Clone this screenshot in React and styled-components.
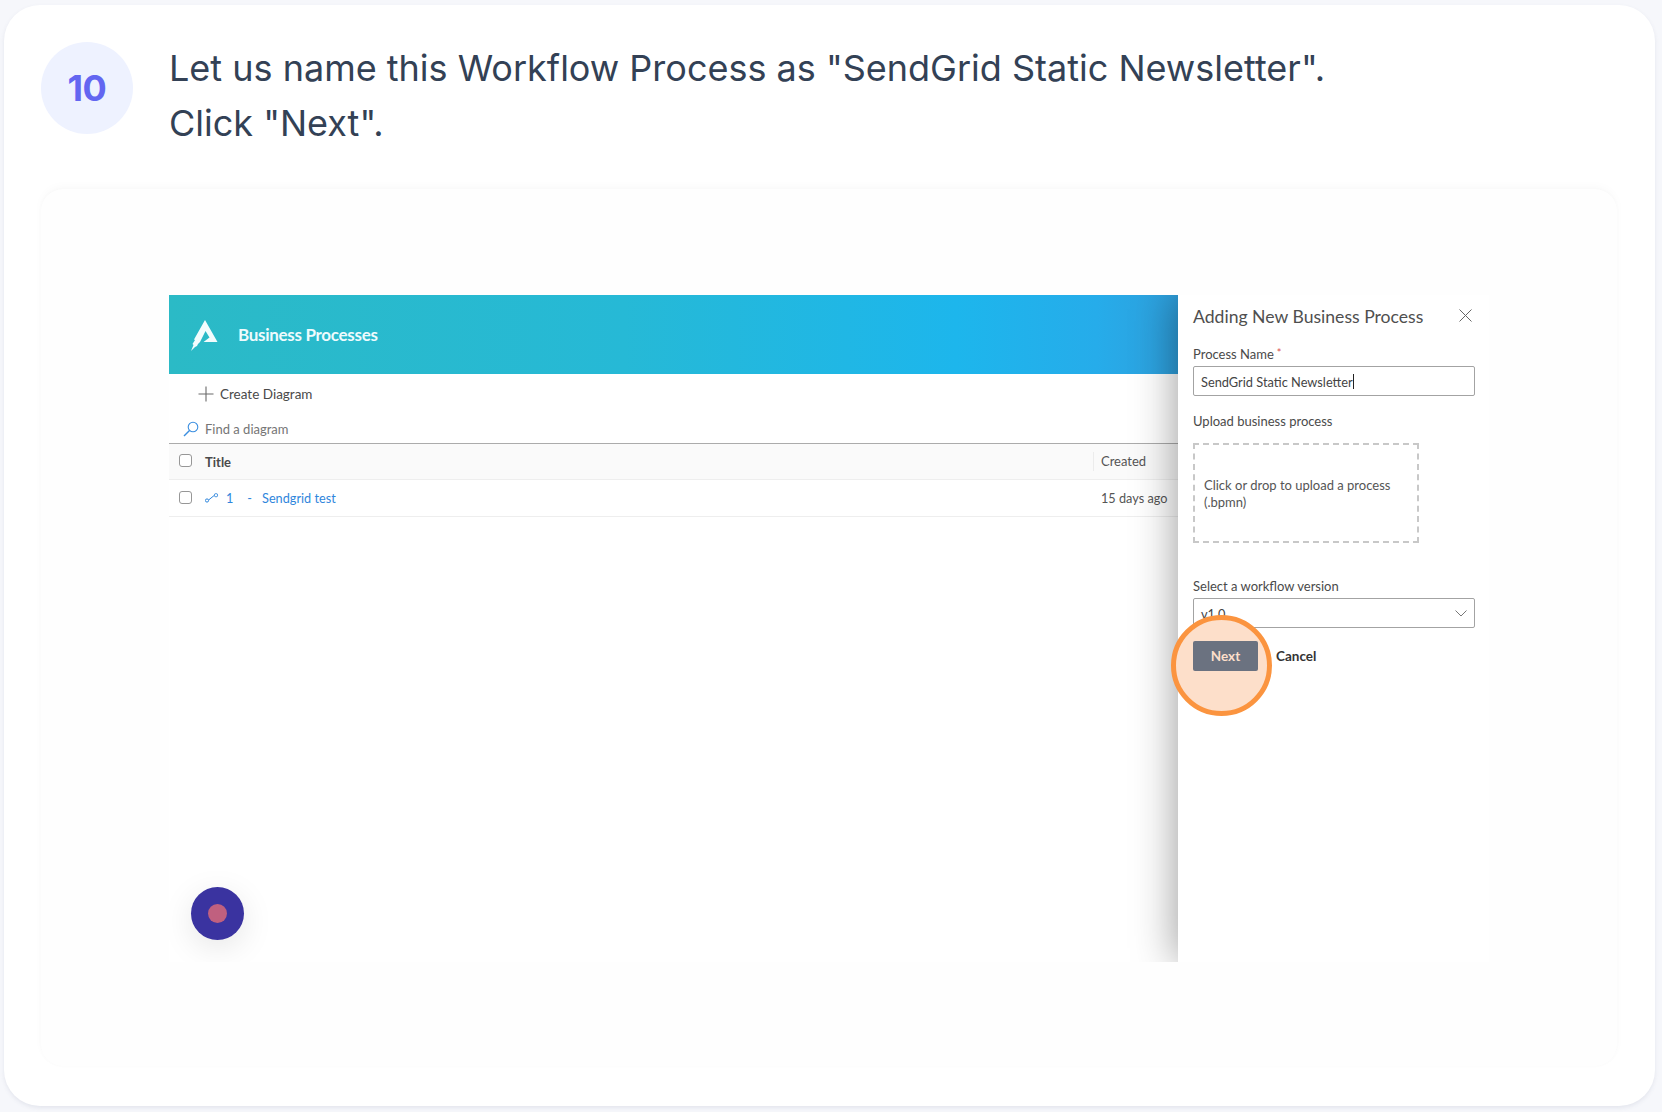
import React from 'react';
import styled, { createGlobalStyle } from 'styled-components';

const GlobalStyle = createGlobalStyle`
  html, body {
    margin: 0;
    padding: 0;
    background: #f6f7fb;
  }
  * { box-sizing: border-box; }
`;

const Page = styled.div`
  width: 1662px;
  height: 1112px;
  padding: 5px 7px 6px 4px;
  overflow: hidden;
`;

const Card = styled.div`
  height: 100%;
  background: #fff;
  border-radius: 36px;
  box-shadow: 0 2px 4px rgba(100, 110, 140, 0.12);
  padding: 37px 38px 40px 37px;
  display: flex;
  flex-direction: column;
`;

const StepRow = styled.div`
  display: flex;
  align-items: flex-start;
  height: 147px;
  gap: 36px;
`;

const StepBadge = styled.div`
  width: 92px;
  height: 92px;
  flex: none;
  border-radius: 50%;
  background: #eef2ff;
  color: #6366f1;
  display: flex;
  align-items: center;
  justify-content: center;
  font: 700 36px 'Inter', sans-serif;
  letter-spacing: -0.5px;
`;

const StepText = styled.div`
  font: 400 36px/55px 'Inter', sans-serif;
  color: #334155;
  margin-top: -1px;
`;

const Frame = styled.div`
  flex: 1;
  border-radius: 22px;
  background: #fefefe;
  box-shadow: 0 -3px 6px rgba(120, 125, 140, 0.04), 0 0 3px rgba(120, 125, 140, 0.03);
  padding: 106px 128px 0 128px;
`;

const Shot = styled.div`
  position: relative;
  height: 667px;
  display: grid;
  grid-template-columns: 1009px 1fr;
  background: #fff;
  overflow: hidden;
  font-family: 'Lato', sans-serif;
  font-size: 13px;
  color: #444;
`;

const Main = styled.div`
  display: flex;
  flex-direction: column;
`;

const Banner = styled.div`
  height: 79px;
  display: flex;
  align-items: center;
  gap: 18px;
  padding-left: 21px;
  background: linear-gradient(90deg, #2bbac6 0%, #26b9d6 45%, #1db6ec 78%, #26acea 92%, #2f9fdc 100%);
  color: #eefbfd;
  font-size: 17px;
  font-weight: 700;
  letter-spacing: -0.3px;
`;

const CreateRow = styled.div`
  height: 41px;
  display: flex;
  align-items: center;
  gap: 6px;
  padding: 0 0 2px 29px;
  font-size: 13.5px;
  color: #4a4a4a;
`;

const SearchRow = styled.div`
  height: 29px;
  display: flex;
  align-items: center;
  gap: 6px;
  padding: 0 0 1px 14px;
  color: #757575;
  border-bottom: 1px solid #ababab;
`;

const TableRow = styled.div`
  height: ${props => (props.$head ? 36 : 37)}px;
  display: flex;
  align-items: center;
  padding-left: 11px;
  background: ${props => (props.$head ? '#fafafa' : '#fff')};
  border-bottom: 1px solid #eeeeee;
`;

const Check = styled.span`
  width: 13px;
  height: 13px;
  flex: none;
  border: 1.3px solid #979797;
  border-radius: 3px;
  background: #fff;
  margin: -2px 12px 0 -1px;
`;

const TitleCell = styled.span`
  flex: 1;
  display: flex;
  align-items: center;
  padding-left: 1px;
  color: ${props => (props.$link ? '#2f86dc' : '#4a4a4a')};
  font-size: ${props => (props.$link ? 12.7 : 13)}px;
  font-weight: ${props => (props.$head ? 700 : 400)};
`;

const RowNumber = styled.span`
  margin: 0 14px 0 7px;
`;

const RowDash = styled.span`
  margin-right: 10px;
`;

const CreatedCell = styled.span`
  width: 85px;
  flex: none;
  height: 19px;
  line-height: 19px;
  padding-left: 7px;
  color: #555;
  font-size: ${props => (props.$head ? 13 : 12.7)}px;
  white-space: nowrap;
  border-left: ${props => (props.$head ? '1px solid #ececec' : '1px solid transparent')};
`;

const Panel = styled.div`
  position: relative;
  background: #fff;
  box-shadow: -2px 0 40px rgba(0, 0, 0, 0.38);
  padding: 0 14px 0 15px;
  color: #4a4a4a;
`;

const PanelHead = styled.div`
  width: 282px;
  height: 40px;
  margin-top: 1px;
  display: flex;
  align-items: center;
  justify-content: space-between;
  padding-right: 3px;
  font-size: 17.6px;
  color: #4f4f4f;
`;

const CloseWrap = styled.span`
  display: flex;
  margin-top: -2px;
`;

const FieldLabel = styled.div`
  height: 16px;
  line-height: 16px;
  margin-top: ${props => props.$top}px;
  margin-bottom: ${props => props.$bottom}px;
`;

const Required = styled.span`
  color: #d9534f;
  font-size: 11px;
  vertical-align: 2px;
  margin-left: 3px;
`;

const TextBox = styled.div`
  width: 282px;
  height: 30px;
  display: flex;
  align-items: center;
  padding: 1px 7px 0;
  border: 1px solid #a3a3a3;
  border-radius: 2px;
  justify-content: ${props => (props.$select ? 'space-between' : 'flex-start')};
  color: #444;
  font-size: 12.8px;
`;

const Caret = styled.span`
  width: 1px;
  height: 15px;
  background: #222;
`;

const DropZone = styled.div`
  width: 226px;
  height: 100px;
  border: 2px dashed #c8c8c8;
  padding: 1px 9px 0;
  display: flex;
  align-items: center;
  line-height: 17px;
  color: #555;
`;

const Actions = styled.div`
  display: flex;
  align-items: center;
  gap: 18px;
  margin-top: 13px;
`;

const NextButton = styled.div`
  position: relative;
  z-index: 1;
  width: 65px;
  height: 30px;
  display: flex;
  align-items: center;
  justify-content: center;
  border-radius: 2px;
  background: #6b7280;
  color: #fddfca;
  font-size: 13.5px;
  font-weight: 700;
`;

const CancelLink = styled.span`
  color: #333;
  font-size: 13.5px;
  font-weight: 700;
`;

const Highlight = styled.div`
  position: absolute;
  left: -7px;
  top: 320px;
  width: 101px;
  height: 101px;
  border-radius: 50%;
  border: 5px solid #fb943f;
  background: #fddfca;
`;

const ChatDot = styled.div`
  position: absolute;
  left: 22px;
  top: 592px;
  width: 53px;
  height: 53px;
  border-radius: 50%;
  background: #3a33a0;
  box-shadow: 0 8px 32px rgba(0, 0, 0, 0.1);
  display: flex;
  align-items: center;
  justify-content: center;
`;

const ChatDotCore = styled.span`
  width: 19px;
  height: 19px;
  border-radius: 50%;
  background: #c0607f;
`;

const Logo = () => (
  <svg width="30" height="32" viewBox="0 0 30 32">
    <path
      fill="#f2fcfd"
      d="M15 1 L27.5 23 L13.5 23 L19.5 18.5 L15.5 12 L10 23 L8 25 L7 27 L5 28 L1 32 L3.5 26 L2.5 25 L5 21 L4 20.5 Z"
    />
  </svg>
);

const Plus = () => (
  <svg width="16" height="16" viewBox="0 0 16 16" stroke="#6a6a6a" strokeWidth="1.1">
    <path d="M8 0.5 V15.5 M0.5 8 H15.5" />
  </svg>
);

const SearchGlass = () => (
  <svg width="16" height="16" viewBox="0 0 16 16" fill="none" stroke="#3a8ee0" strokeWidth="1.1">
    <circle cx="10" cy="6" r="4.8" />
    <path d="M6.5 9.5 L1 15" strokeWidth="1.4" />
  </svg>
);

const ProcessGlyph = () => (
  <svg width="14" height="10" viewBox="0 0 14 10" fill="none" stroke="#2f86dc" strokeWidth="1" style={{ flex: 'none' }}>
    <circle cx="2" cy="7.5" r="1.6" />
    <path d="M3.6 7 L9 2.6" />
    <rect x="9.5" y="0.7" width="3" height="3" rx="1" />
  </svg>
);

const CloseX = () => (
  <svg width="13" height="13" viewBox="0 0 13 13" stroke="#666" strokeWidth="1">
    <path d="M0.5 0.5 L12.5 12.5 M12.5 0.5 L0.5 12.5" />
  </svg>
);

const Chevron = () => (
  <svg width="12" height="7" viewBox="0 0 12 7" fill="none" stroke="#777" strokeWidth="1">
    <path d="M0.5 0.5 L6 6 L11.5 0.5" />
  </svg>
);

const App = () => (
  <>
    <GlobalStyle />
    <Page>
      <Card>
        <StepRow>
          <StepBadge>10</StepBadge>
          <StepText>
            Let us name this Workflow Process as "SendGrid Static Newsletter".
            <br />
            Click "Next".
          </StepText>
        </StepRow>
        <Frame>
          <Shot>
            <Main>
              <Banner>
                <Logo />
                Business Processes
              </Banner>
              <CreateRow>
                <Plus />
                Create Diagram
              </CreateRow>
              <SearchRow>
                <SearchGlass />
                Find a diagram
              </SearchRow>
              <TableRow $head>
                <Check />
                <TitleCell $head>Title</TitleCell>
                <CreatedCell $head>Created</CreatedCell>
              </TableRow>
              <TableRow>
                <Check />
                <TitleCell $link>
                  <ProcessGlyph />
                  <RowNumber>1</RowNumber>
                  <RowDash>-</RowDash>
                  Sendgrid test
                </TitleCell>
                <CreatedCell>15 days ago</CreatedCell>
              </TableRow>
            </Main>
            <Panel>
              <PanelHead>
                Adding New Business Process
                <CloseWrap>
                  <CloseX />
                </CloseWrap>
              </PanelHead>
              <FieldLabel $top={9} $bottom={5}>
                Process Name<Required>*</Required>
              </FieldLabel>
              <TextBox>
                SendGrid Static Newsletter
                <Caret />
              </TextBox>
              <FieldLabel $top={17} $bottom={14}>Upload business process</FieldLabel>
              <DropZone>Click or drop to upload a process (.bpmn)</DropZone>
              <FieldLabel $top={35} $bottom={4}>Select a workflow version</FieldLabel>
              <TextBox $select>
                v1.0
                <Chevron />
              </TextBox>
              <Actions>
                <NextButton>Next</NextButton>
                <CancelLink>Cancel</CancelLink>
              </Actions>
              <Highlight />
            </Panel>
            <ChatDot>
              <ChatDotCore />
            </ChatDot>
          </Shot>
        </Frame>
      </Card>
    </Page>
  </>
);

export default App;
